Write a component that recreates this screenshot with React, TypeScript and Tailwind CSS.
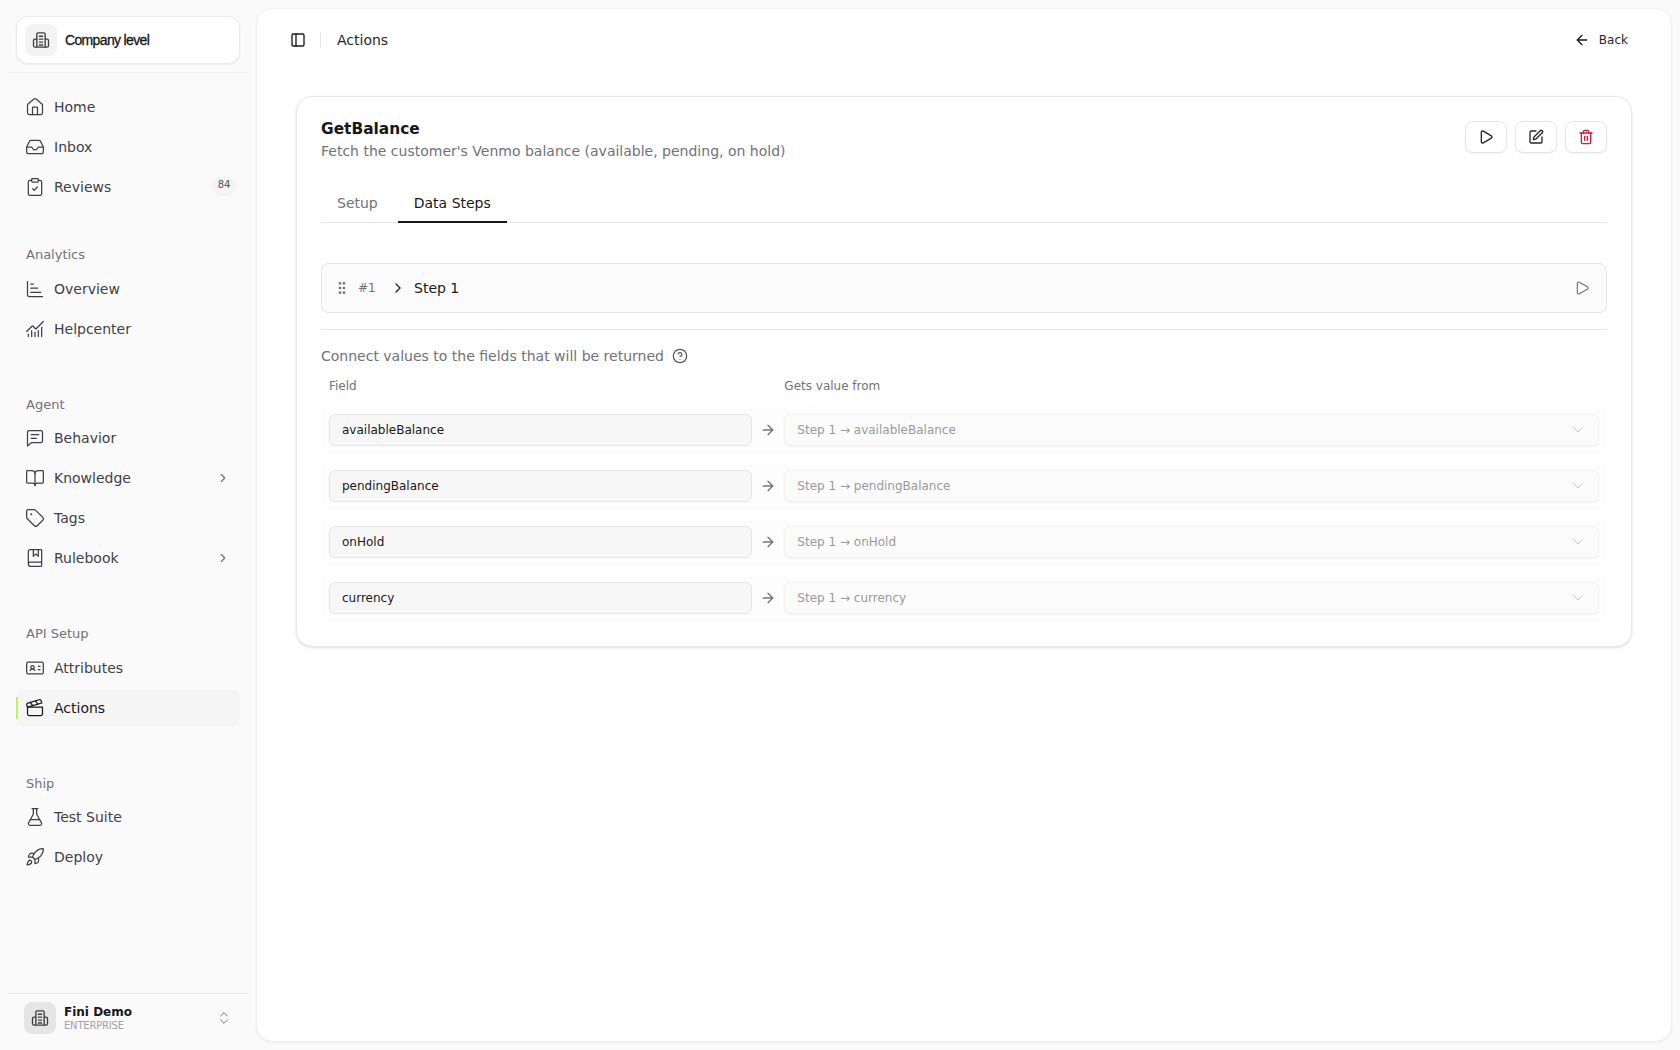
import {
  ArrowLeft,
  ArrowRight,
  BookMarked,
  BookOpen,
  ChartBarIncreasing,
  ChartNoAxesCombined,
  ChevronDown,
  ChevronRight,
  ChevronsUpDown,
  CircleHelp,
  ClipboardCheck,
  Clapperboard,
  FlaskConical,
  GripVertical,
  House,
  IdCard,
  Inbox,
  PanelLeft,
  Play,
  Rocket,
  SquarePen,
  Tag,
  Trash2,
} from "lucide-react";
import type { ReactNode } from "react";

type NavItemProps = {
  icon: ReactNode;
  label: string;
  active?: boolean;
  badge?: string;
  chevron?: boolean;
};

const iconClass = "w-5 h-5 shrink-0 stroke-[1.5]";

// tower with two low wings, not the same as lucide's Building2
const CompanyIcon = () => (
  <svg
    viewBox="0 0 24 24"
    fill="none"
    stroke="currentColor"
    strokeWidth={1.6}
    strokeLinecap="round"
    strokeLinejoin="round"
    className="h-5 w-5 text-[#404040]"
  >
    <path d="M7 20.5V5a1.5 1.5 0 0 1 1.5-1.5h7A1.5 1.5 0 0 1 17 5v15.5z" />
    <path d="M7 11H4.5A1.5 1.5 0 0 0 3 12.5v6.5a1.5 1.5 0 0 0 1.5 1.5H7" />
    <path d="M17 11h2.500A1.500 1.500 0 0 1 21 12.500v6.500a1.500 1.500 0 0 1-1.500 1.500H17" />
    <path d="M10 7.500h4M10 11h4M10 14.500h4M10 18h4" />
  </svg>
);

const MessageIcon = () => (
  <svg
    viewBox="0 0 24 24"
    fill="none"
    stroke="currentColor"
    strokeWidth={1.5}
    strokeLinecap="round"
    strokeLinejoin="round"
    className={iconClass}
  >
    <path d="M3 5a2 2 0 0 1 2-2h14a2 2 0 0 1 2 2v10.500a2 2 0 0 1-2 2H8L3 21.500z" />
    <path d="M7.500 8h9M7.500 12.500h6" />
  </svg>
);

const NavItem = ({ icon, label, active, badge, chevron }: NavItemProps) => (
  <div
    className={`relative flex h-9 items-center gap-[9px] rounded-lg pl-[9px] pr-2 text-sm ${
      active ? "bg-[#f5f5f5] text-[#18181b]" : "text-[#3f3f46]"
    }`}
  >
    {active && <span className="absolute left-0 top-[7px] h-[22px] w-0.5 bg-[#bef264]" />}
    {icon}
    <span>{label}</span>
    {badge && (
      <span className="ml-auto -mt-[3px] -mr-1 flex h-5 w-6 items-center justify-center rounded-full bg-[#f4f4f4] text-[10px] text-[#52525b]">
        {badge}
      </span>
    )}
    {chevron && <ChevronRight className="ml-auto mr-[2px] h-3.5 w-3.5 text-[#71717a]" />}
  </div>
);

const SectionLabel = ({ children, tight }: { children: ReactNode; tight?: boolean }) => (
  <div className={`flex h-6 items-center pl-[10px] text-[13px] text-[#71717a] ${tight ? "-mb-px" : ""}`}>
    {children}
  </div>
);

const mappings = ["availableBalance", "pendingBalance", "onHold", "currency"];

const IconButton = ({ children }: { children: ReactNode }) => (
  <button className="flex h-8 w-[42px] items-center justify-center rounded-lg border border-[#e5e5e5] bg-white shadow-xs">
    {children}
  </button>
);

const App = () => {
  return (
    <div className="flex h-screen overflow-hidden bg-[#fafafa] font-['DejaVu_Sans',sans-serif]">
      {/* Sidebar */}
      <aside className="flex h-full w-64 shrink-0 flex-col">
        <div className="mx-2 border-b border-[#efefef] px-2 pt-4 pb-2">
          <div className="flex h-12 items-center gap-2 rounded-xl border border-[#e9e9e9] bg-white pl-2 shadow-xs">
            <div className="flex h-8 w-8 items-center justify-center rounded-lg bg-[#f3f3f3]">
              <CompanyIcon />
            </div>
            <span className="font-['Liberation_Sans',sans-serif] text-sm tracking-[-0.65px] text-[#171717] [-webkit-text-stroke:0.3px_#171717]">
              Company level
            </span>
          </div>
        </div>

        <nav className="flex flex-1 flex-col px-4 pt-4">
          <div className="flex flex-col gap-1">
            <NavItem icon={<House className={iconClass} />} label="Home" />
            <NavItem icon={<Inbox className={iconClass} />} label="Inbox" />
            <NavItem icon={<ClipboardCheck className={iconClass} />} label="Reviews" badge="84" />
          </div>

          <div className="mt-[38px] flex flex-col gap-1">
            <SectionLabel>Analytics</SectionLabel>
            <NavItem icon={<ChartBarIncreasing className={iconClass} />} label="Overview" />
            <NavItem icon={<ChartNoAxesCombined className={iconClass} />} label="Helpcenter" />
          </div>

          <div className="mt-[46px] flex flex-col gap-1">
            <SectionLabel tight>Agent</SectionLabel>
            <NavItem icon={<MessageIcon />} label="Behavior" />
            <NavItem icon={<BookOpen className={iconClass} />} label="Knowledge" chevron />
            <NavItem icon={<Tag className={iconClass} />} label="Tags" />
            <NavItem icon={<BookMarked className={iconClass} />} label="Rulebook" chevron />
          </div>

          <div className="mt-[46px] flex flex-col gap-1">
            <SectionLabel>API Setup</SectionLabel>
            <NavItem icon={<IdCard className={iconClass} />} label="Attributes" />
            <NavItem icon={<Clapperboard className={iconClass} />} label="Actions" active />
          </div>

          <div className="mt-[46px] flex flex-col gap-1">
            <SectionLabel tight>Ship</SectionLabel>
            <NavItem icon={<FlaskConical className={iconClass} />} label="Test Suite" />
            <NavItem icon={<Rocket className={iconClass} />} label="Deploy" />
          </div>
        </nav>

        {/* Workspace switcher */}
        <div className="mx-2 flex h-[57px] items-center border-t border-[#efefef] px-4 pb-2">
          <div className="flex h-8 w-8 items-center justify-center rounded-lg bg-[#e5e5e5]">
            <CompanyIcon />
          </div>
          <div className="ml-2 flex flex-col">
            <span className="text-xs leading-[15px] font-bold text-[#171717]">Fini Demo</span>
            <span className="text-[10px] leading-[11px] tracking-[-0.2px] text-[#a1a1aa]">ENTERPRISE</span>
          </div>
          <ChevronsUpDown className="ml-auto h-4 w-4 text-[#71717a]" strokeWidth={1.5} />
        </div>
      </aside>

      {/* Main panel */}
      <main className="my-2 mr-2 flex-1 rounded-2xl border border-[#f0f0f0] bg-white shadow-xs">
        <header className="flex h-[61px] items-center pl-[33px] pr-[43px]">
          <PanelLeft className="h-4 w-4 text-[#18181b]" strokeWidth={2} />
          <div className="ml-[14px] mr-4 h-4 w-px bg-[#e5e5e5]" />
          <span className="text-sm text-[#27272a]">Actions</span>
          <button className="ml-auto flex items-center gap-[9px] text-xs text-[#27272a]">
            <ArrowLeft className="h-4 w-4 text-[#18181b]" strokeWidth={2} />
            Back
          </button>
        </header>

        <div className="mx-[39px] mt-[26px] rounded-2xl border border-[#e8e8e8] bg-white px-6 pb-6 pt-5 shadow-sm">
          <div className="flex items-start justify-between">
            <div>
              <h1 className="text-[15.4px] leading-6 font-bold text-[#171717]">GetBalance</h1>
              <p className="text-sm leading-[21px] text-[#71717a]">
                Fetch the customer's Venmo balance (available, pending, on hold)
              </p>
            </div>
            <div className="mt-1 flex gap-2">
              <IconButton>
                <Play className="h-4 w-4 text-[#27272a]" strokeWidth={2} />
              </IconButton>
              <IconButton>
                <SquarePen className="h-4 w-4 text-[#27272a]" strokeWidth={2} />
              </IconButton>
              <IconButton>
                <Trash2 className="h-4 w-4 text-[#c81e3a]" strokeWidth={2} />
              </IconButton>
            </div>
          </div>

          {/* Tabs */}
          <div className="mt-[21px] flex gap-1 border-b border-[#e5e5e5]">
            <div className="-mb-px flex h-10 items-center px-4 text-sm text-[#71717a]">Setup</div>
            <div className="-mb-px flex h-10 items-center border-y-2 border-t-transparent border-b-[#171717] px-4 text-sm text-[#18181b]">
              Data Steps
            </div>
          </div>

          {/* Step */}
          <div className="mt-10 flex h-[50px] items-center rounded-lg border border-[#e5e5e5] bg-[#fbfbfb] pl-[12px] pr-4">
            <GripVertical className="h-4 w-4 text-[#71717a]" strokeWidth={2} />
            <span className="ml-[8px] w-[29px] text-xs text-[#71717a]">#1</span>
            <ChevronRight className="mr-2 ml-[3px] h-4 w-4 text-[#27272a]" />
            <span className="text-sm text-[#18181b]">Step 1</span>
            <Play className="ml-auto h-4 w-4 text-[#71717a]" strokeWidth={1.75} />
          </div>

          <div className="mt-4 border-t border-[#e5e5e5]" />

          <div className="mt-[15px] flex h-[21px] items-center gap-2 text-sm text-[#71717a]">
            Connect values to the fields that will be returned
            <CircleHelp className="h-4 w-4 text-[#52525b]" strokeWidth={1.75} />
          </div>

          <div className="mt-3 flex px-2 text-xs text-[#71717a]">
            <span className="w-1/3">Field</span>
            <span className="ml-8">Gets value from</span>
          </div>

          <div className="mt-3 flex flex-col gap-2">
            {mappings.map((name) => (
              <div key={name} className="flex items-center rounded-lg bg-[#fdfdfd] p-2">
                <div className="flex h-8 w-1/3 items-center rounded-md border border-[#e5e5e5] bg-[#f7f7f7] px-3 text-xs text-[#18181b]">
                  {name}
                </div>
                <div className="flex w-8 justify-center">
                  <ArrowRight className="h-4 w-4 text-[#71717a]" strokeWidth={2} />
                </div>
                <div className="flex h-8 flex-1 items-center justify-between rounded-md border border-[#f2f2f2] bg-[#fbfbfb] px-3 text-xs text-[#9a9a9a] shadow-xs">
                  <span>Step 1 → {name}</span>
                  <ChevronDown className="h-4 w-4 text-[#c4c4c4]" strokeWidth={1.5} />
                </div>
              </div>
            ))}
          </div>
        </div>
      </main>
    </div>
  );
};

export default App;
